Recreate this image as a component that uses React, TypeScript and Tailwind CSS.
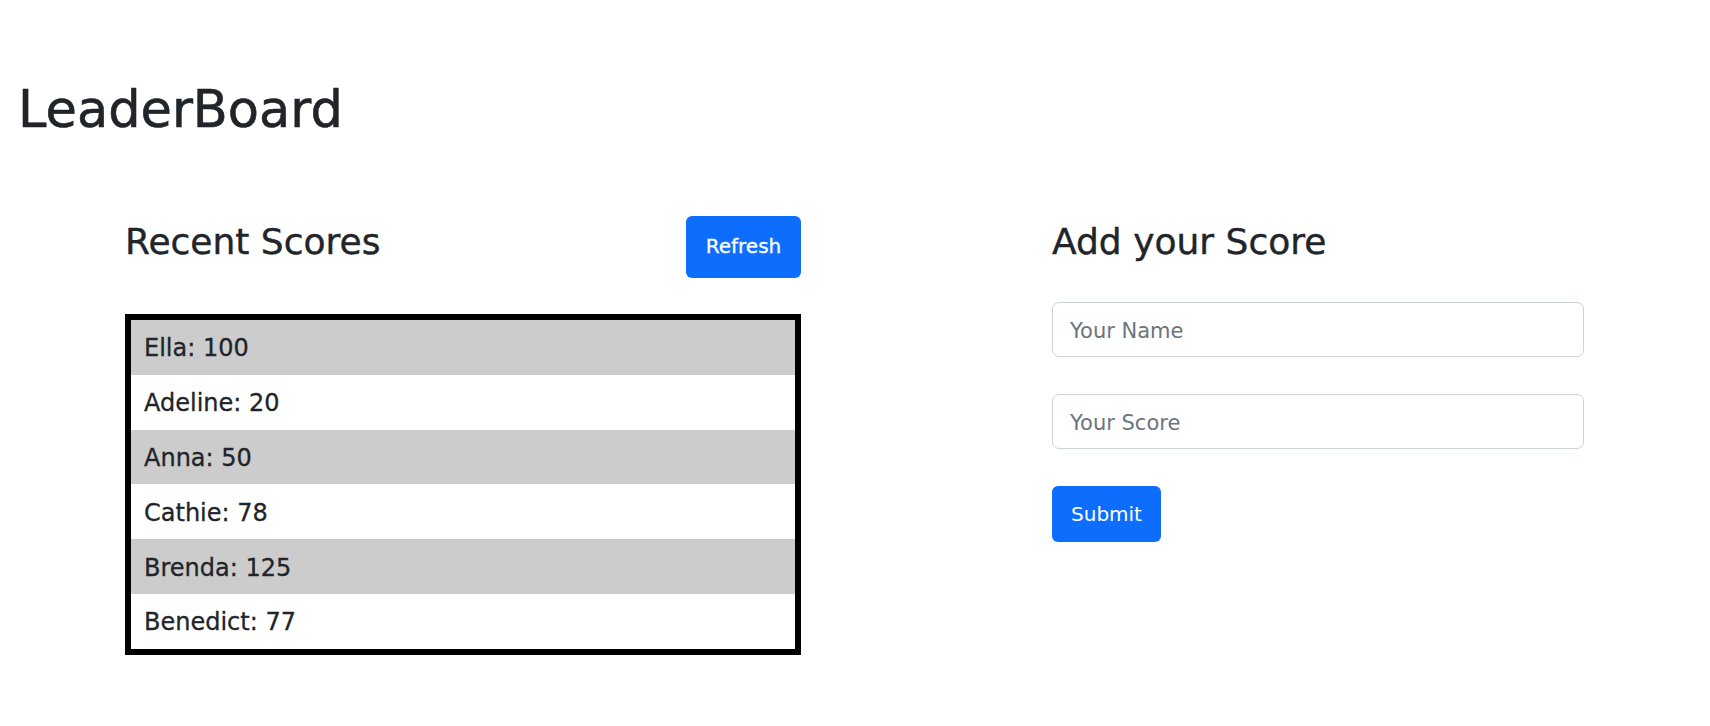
import React, { useState } from "react";

type scoreType = {
  name: string;
  score: number;
};

const initialScores: scoreType[] = [
  { name: "Ella", score: 100 },
  { name: "Adeline", score: 20 },
  { name: "Anna", score: 50 },
  { name: "Cathie", score: 78 },
  { name: "Brenda", score: 125 },
  { name: "Benedict", score: 77 },
];

const App = () => {
  const [scores, setScores] = useState<scoreType[]>(initialScores);
  const [name, setName] = useState<string>("");
  const [score, setScore] = useState<string>("");

  const submit = (e: React.FormEvent) => {
    e.preventDefault();
    if (!name || !score) return;
    setScores([...scores, { name, score: Number(score) }]);
    setName("");
    setScore("");
  };

  return (
    <div className="min-h-screen bg-white text-[#212529] font-['DejaVu_Sans',sans-serif]">
      <h1 className="pt-[79px] pl-[18px] text-[51px] leading-[61px] [-webkit-text-stroke:0.6px_#212529]">
        LeaderBoard
      </h1>

      <div className="mt-[76px] flex">
        {/* recent scores */}
        <section className="ml-[125px] w-[676px]">
          <div className="flex items-start justify-between">
            <h3 className="mt-[5px] text-[36px] leading-[42px] [-webkit-text-stroke:0.4px_#212529]">
              Recent Scores
            </h3>
            <button
              type="button"
              onClick={() => setScores([...scores])}
              className="flex h-[62px] w-[115px] items-center justify-center rounded-[6px] bg-[#0d6efd] pb-[3px] text-[20px] text-white [-webkit-text-stroke:0.3px_#ffffff]"
            >
              Refresh
            </button>
          </div>
          <ul className="mt-[36px] border-[6px] border-black">
            {scores.map((item, i) => (
              <li
                key={item.name + i}
                className={`flex h-[54.8px] items-center pl-[13px] pt-[2px] text-[24px] [-webkit-text-stroke:0.3px_#212529] ${
                  i % 2 === 0 ? "bg-[#cccccc]" : "bg-white"
                }`}
              >
                {item.name}: {item.score}
              </li>
            ))}
          </ul>
        </section>

        {/* add score */}
        <section className="ml-[251px] w-[532px]">
          <h3 className="mt-[5px] text-[36px] leading-[42px] [-webkit-text-stroke:0.4px_#212529]">
            Add your Score
          </h3>
          <form onSubmit={submit} className="mt-[39px] flex flex-col items-start">
            <input
              value={name}
              onChange={(e) => setName(e.target.value)}
              placeholder="Your Name"
              className="h-[55px] w-full rounded-[7px] border border-[#ced4da] pl-[17px] pt-[2px] text-[21px] outline-none placeholder:text-[#6c757d]"
            />
            <input
              value={score}
              onChange={(e) => setScore(e.target.value)}
              placeholder="Your Score"
              className="mt-[37px] h-[55px] w-full rounded-[7px] border border-[#ced4da] pl-[17px] pt-[2px] text-[21px] outline-none placeholder:text-[#6c757d]"
            />
            <button
              type="submit"
              className="mt-[37px] flex h-[56px] w-[109px] items-center justify-center rounded-[6px] bg-[#0d6efd] text-[20px] text-white"
            >
              Submit
            </button>
          </form>
        </section>
      </div>
    </div>
  );
};

export default App;
